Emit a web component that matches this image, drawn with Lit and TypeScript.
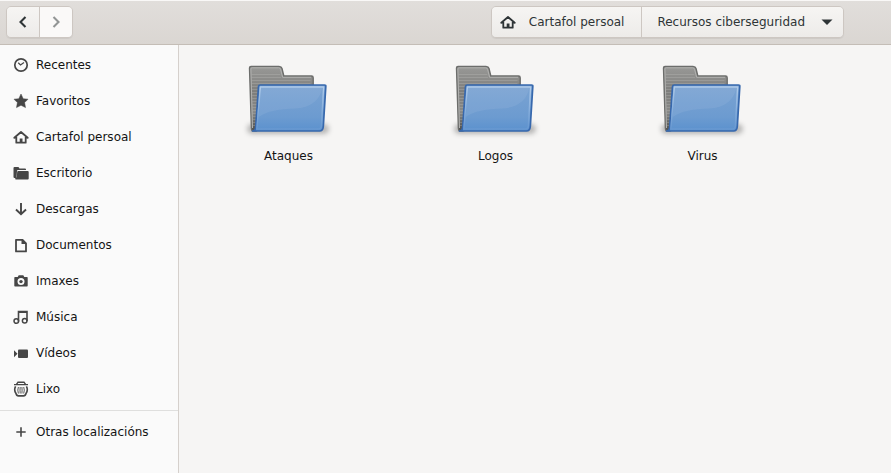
import { LitElement, html, css, svg } from "lit";
import { customElement, property } from "lit/decorators.js";

const icons: Record<string, unknown> = {
  recent: svg`<circle cx="8" cy="8" r="6.2" fill="none" stroke="currentColor" stroke-width="1.7"/><path d="M5.2 5.8 7.5 8 11 5.4" fill="none" stroke="currentColor" stroke-width="1.2"/>`,
  star: svg`<path d="M8 1 10.2 5.7 15 6.2 11.6 9.6 12.5 14.6 8 12.3 3.5 14.6 4.4 9.6 1 6.2 5.8 5.7Z" stroke="currentColor" stroke-width=".5" stroke-linejoin="round"/>`,
  home: svg`<path d="M1.3 8.8 8 3 14.7 8.8M3.3 8v5.7h9.4V8" fill="none" stroke="currentColor" stroke-width="1.8" stroke-linejoin="round" stroke-linecap="round"/><path d="M6.7 14V9.5h2.8V14Z"/>`,
  folder: svg`<path d="M.5 3q0-1 1-1h3.7q1 0 1.2 1.6H12q1 0 1 1V5H5Q4 5 4 6L3.5 13h-2Q.5 13 .5 12Z"/><path d="M5.2 6h9.500q1 0 1 1v6.500q0 1-1 1H3q-1 0-1-1 1.600-.3 1.800-2L4.200 7q0-1 1-1Z"/>`,
  download: svg`<path d="M8 2v11M3 8.5 8 13.2 13 8.5" fill="none" stroke="currentColor" stroke-width="1.9"/>`,
  document: svg`<path d="M3 2.800h6.500l3.500 3.600v8H3Z" fill="none" stroke="currentColor" stroke-width="1.800" stroke-linejoin="round"/><path d="M8.500 2v5H13V6L9.500 2Z"/>`,
  camera: svg`<path fill-rule="evenodd" d="M2 4h2.700l1-1.800h4.600l1 1.800H14q.7 0 .7.800v8q0 .8-.7.800H2q-.7 0-.7-.8v-8Q1.300 4 2 4ZM8 5.100a3.500 3.500 0 1 0 0 7 3.500 3.500 0 0 0 0-7Z"/><circle cx="8" cy="8.600" r="1.700"/>`,
  music: svg`<path d="M5.500 12.500V2.500h8.500V12M5.500 3.300h8.500" fill="none" stroke="currentColor" stroke-width="1.600"/><circle cx="3.300" cy="12" r="2.300" fill="none" stroke="currentColor" stroke-width="1.500"/><circle cx="11.700" cy="11.800" r="2.300" fill="none" stroke="currentColor" stroke-width="1.500"/>`,
  video: svg`<path d="M1 5.200 4.500 8.700 1 12.200Z"/><rect x="5" y="4.500" width="10" height="8.500" rx="1"/>`,
  trash: svg`<path d="M3.500 3.300 5 1.200h6l1.500 2.100M1 3.600h14" fill="none" stroke="currentColor" stroke-width="1.400"/><path d="M2.600 5.300Q.6 9 3 12.500 3.500 14.800 5.500 14.900h5Q12.500 14.800 13 12.500 15.400 9 13.400 5.300" fill="none" stroke="currentColor" stroke-width="1.600"/><path d="M5.400 6Q4.200 9 5.400 12.500M7.200 6Q6.800 9 7.200 12.500M8.900 6Q9.300 9 8.900 12.500M10.700 6Q11.900 9 10.700 12.500" fill="none" stroke="currentColor" stroke-width=".9"/>`,
  plus: svg`<path d="M8 3.300v9.400M3.300 8h9.400" fill="none" stroke="currentColor" stroke-width="1.600"/>`,
  back: svg`<path d="M10.500 3 5.500 8l5 5" fill="none" stroke="currentColor" stroke-width="2.100"/>`,
  forward: svg`<path d="M5.500 3l5 5-5 5" fill="none" stroke="currentColor" stroke-width="2.100"/>`,
  down: svg`<path d="M2.500 5.500h11L8 11Z"/>`,
};

@customElement("ui-icon")
class UiIcon extends LitElement {
  @property() name = "";
  static styles = css`
    :host { display: block; flex: none; width: 16px; height: 16px; }
    svg { display: block; width: 100%; height: 100%; fill: currentColor; }
  `;
  render() {
    return html`<svg viewBox="0 0 16 16" aria-hidden="true">${icons[this.name]}</svg>`;
  }
}

@customElement("folder-picture")
class FolderPicture extends LitElement {
  static styles = css`
    :host { display: block; }
    svg { display: block; overflow: visible; }
  `;
  render() {
    return html`<svg width="90" height="76" viewBox="0 0 90 76" aria-hidden="true">
      <defs>
        <linearGradient id="back" x1="0" y1="0" x2="0" y2="1">
          <stop offset="0" stop-color="#999997"/><stop offset=".4" stop-color="#7d7d7b"/><stop offset=".7" stop-color="#8a8a88"/><stop offset="1" stop-color="#4c4d4b"/>
        </linearGradient>
        <linearGradient id="front" x1="0" y1="0" x2="0" y2="1">
          <stop offset="0" stop-color="#7ba3d2"/><stop offset=".7" stop-color="#6c9bd0"/><stop offset="1" stop-color="#5b91ce"/>
        </linearGradient>
        <linearGradient id="edge" x1="0" y1="0" x2="0" y2="1">
          <stop offset="0" stop-color="#b0cbe9"/><stop offset="1" stop-color="#6798d1"/>
        </linearGradient>
        <pattern id="lines" width="4" height="3" patternUnits="userSpaceOnUse">
          <path d="M0 .5h4" stroke="#c0c0be" stroke-opacity=".3"/>
        </pattern>
        <filter id="soft" x="-20%" y="-60%" width="140%" height="220%"><feGaussianBlur stdDeviation="2.600"/></filter>
      </defs>
      <rect x="3" y="62" width="82" height="10" rx="5" fill="#000" fill-opacity=".26" filter="url(#soft)"/>
      <path d="M5.500 6q0-1.500 1.500-1.500h28q2.500 0 3 2l1.800 7.500h27.700q1.700 0 1.700 1.700V40L12 69H9Q7.500 69 7.400 66Z" fill="url(#back)" stroke="#6c6d6b" stroke-width="1.400"/>
      <path d="M7.500 10h28l2 7h29v20L10 66H9Z" fill="url(#lines)"/>
      <path d="M8.500 66 6.900 7q0-1.200 1.200-1.200h26.600q1.500 0 1.900 1.500l2 8H67" fill="none" stroke="#b2b2b0" stroke-width="1"/>
      <path d="M14.500 24.500q.2-1.500 1.700-1.500h64.300q1.500 0 1.300 1.500L79.300 64.500Q78.900 69 75.500 69H8.500q3-.3 3.200-4Z" fill="url(#front)" stroke="#3768ad" stroke-width="1.700" stroke-linejoin="round"/>
      <path d="M17 26h61.200C76.500 37 67 46 51 46.500 36 47 23 49 14.700 55Z" fill="#fff" fill-opacity=".07"/>
      <path d="M16.400 25h63.200L77.400 64Q77 67 74.500 67H12.800Z" fill="none" stroke="url(#edge)" stroke-width="1.400" stroke-linejoin="round"/>
    </svg>`;
  }
}

const places = [
  ["recent", "Recentes"],
  ["star", "Favoritos"],
  ["home", "Cartafol persoal"],
  ["folder", "Escritorio"],
  ["download", "Descargas"],
  ["document", "Documentos"],
  ["camera", "Imaxes"],
  ["music", "Música"],
  ["video", "Vídeos"],
  ["trash", "Lixo"],
];

@customElement("app-root")
class AppRoot extends LitElement {
  static styles = css`
    :host {
      display: flex;
      flex-direction: column;
      min-height: 100vh;
      box-sizing: border-box;
      border-top: 1px solid #f9f8f7;
      background: #f6f5f4;
      color: #141414;
      font: 12px/16px "DejaVu Sans", sans-serif;
    }
    button { font: inherit; color: inherit; margin: 0; padding: 0; }
    header {
      display: flex;
      justify-content: space-between;
      align-items: center;
      box-sizing: border-box;
      height: 44px;
      padding: 0 47px 2px 6px;
      background: linear-gradient(#e1dedb, #dad6d2);
      border-bottom: 1px solid #c4bdb6;
    }
    .group {
      display: flex;
      height: 32px;
      box-sizing: border-box;
      border: 1px solid #cdc7c2;
      border-radius: 5px;
      overflow: hidden;
      box-shadow: 0 1px 1px #0001;
      color: #2e3436;
    }
    .group button {
      display: flex;
      align-items: center;
      border: 0;
      background: linear-gradient(#f6f5f3, #edebe9);
    }
    .group button + button { border-left: 1px solid #cdc7c2; }
    .nav button { width: 32px; justify-content: center; }
    .nav button:disabled { width: 33px; background: #faf9f8; color: #929595; }
    .path .home { padding: 0 17px 0 8px; gap: 13px; }
    .path .current { padding: 0 8px 0 15px; gap: 14px; }
    main { display: flex; flex: 1; }
    nav {
      flex: none;
      width: 178px;
      background: #fafafa;
      border-right: 1px solid #d5d0cc;
    }
    ul { list-style: none; margin: 0; padding: 2px 0 3px; }
    ul + ul { border-top: 1px solid #dfdfde; padding-top: 3px; }
    nav a {
      display: flex;
      align-items: center;
      gap: 7px;
      height: 36px;
      padding: 0 13px;
      color: inherit;
      text-decoration: none;
    }
    nav ui-icon { color: #464646; }
    .files {
      flex: 1;
      display: grid;
      grid-template-columns: repeat(auto-fill, 207px);
      align-content: start;
      padding: 17px 6px;
    }
    .file {
      display: flex;
      flex-direction: column;
      align-items: center;
      gap: 10px;
      border: 0;
      background: none;
    }
  `;

  render() {
    return html`
      <header>
        <div class="group nav">
          <button aria-label="Atrás"><ui-icon name="back"></ui-icon></button>
          <button aria-label="Adiante" disabled><ui-icon name="forward"></ui-icon></button>
        </div>
        <div class="group path">
          <button class="home"><ui-icon name="home"></ui-icon>Cartafol persoal</button>
          <button class="current">Recursos ciberseguridad<ui-icon name="down"></ui-icon></button>
        </div>
      </header>
      <main>
        <nav>
          <ul>
            ${places.map(([icon, label]) => html`<li><a href="#"><ui-icon name=${icon}></ui-icon>${label}</a></li>`)}
          </ul>
          <ul>
            <li><a href="#"><ui-icon name="plus"></ui-icon>Otras localizacións</a></li>
          </ul>
        </nav>
        <section class="files">
          ${["Ataques", "Logos", "Virus"].map((name) => html`<button class="file"><folder-picture></folder-picture>${name}</button>`)}
        </section>
      </main>
    `;
  }
}
